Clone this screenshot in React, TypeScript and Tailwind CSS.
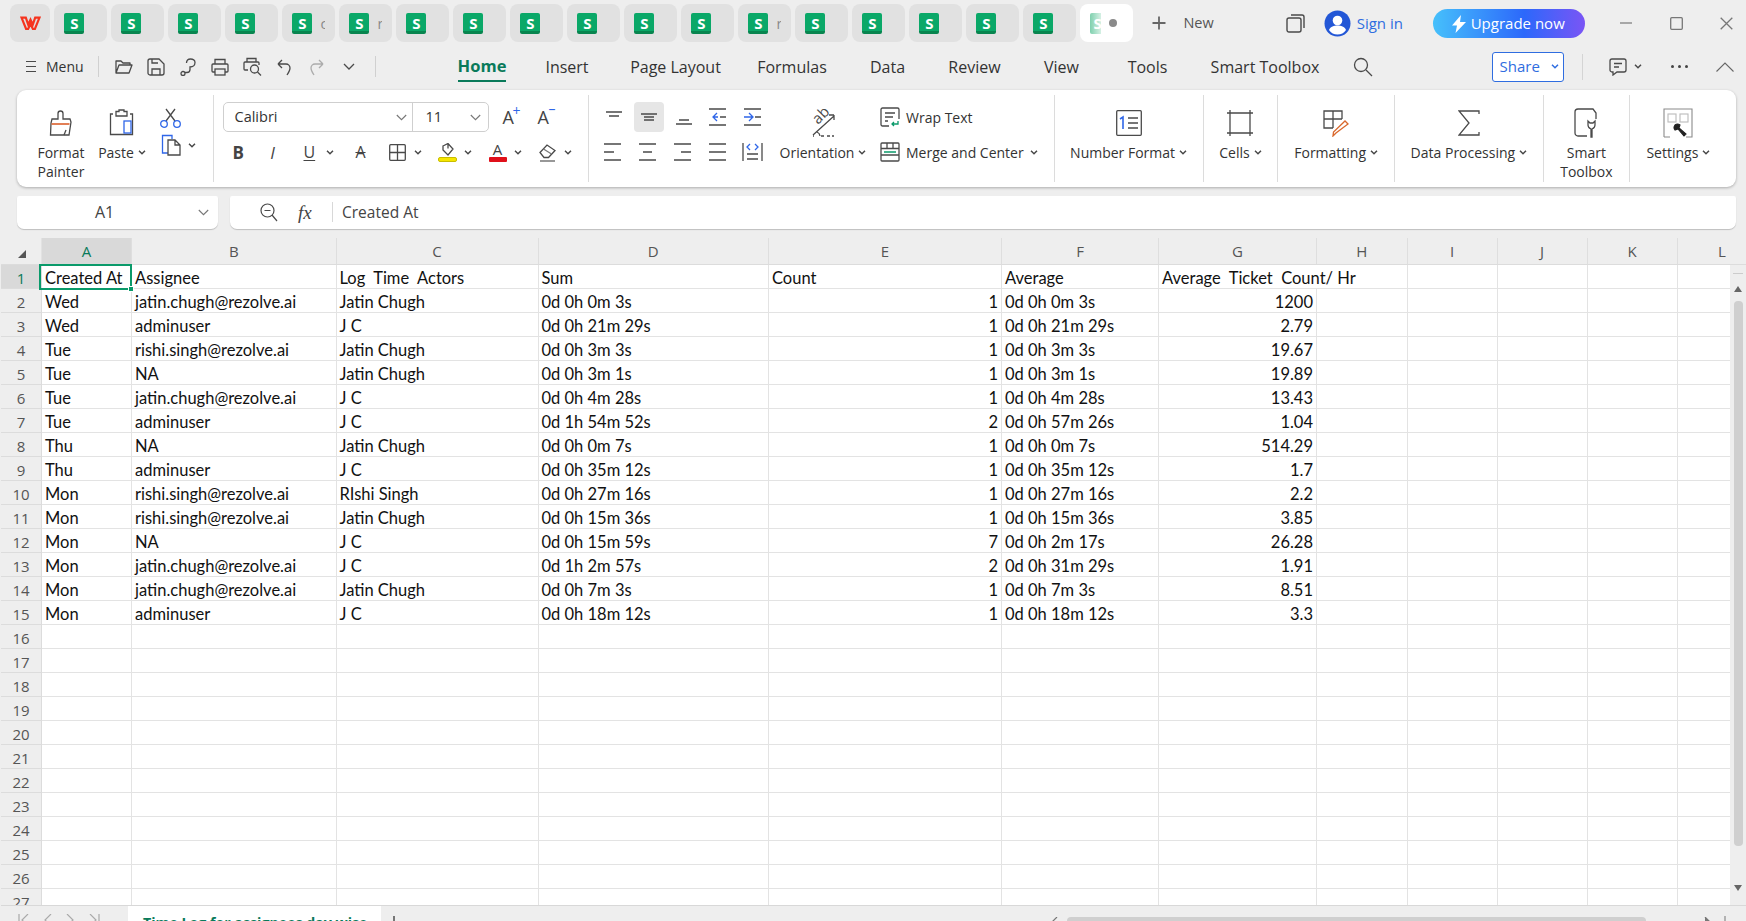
import React from "react";

const ui = "[font-family:'Open_Sans','Noto_Sans',sans-serif]";
const gridCols = "grid grid-cols-[41px_90px_204.5px_202px_230.5px_233px_157px_158px_90.5px_90px_90px_90px_90px]";

const rows: string[][] = [
  ["Created At", "Assignee", "Log  Time  Actors", "Sum", "Count", "Average", "Average  Ticket  Count/ Hr"],
  ["Wed", "jatin.chugh@rezolve.ai", "Jatin Chugh", "0d 0h 0m 3s", "1", "0d 0h 0m 3s", "1200"],
  ["Wed", "adminuser", "J C", "0d 0h 21m 29s", "1", "0d 0h 21m 29s", "2.79"],
  ["Tue", "rishi.singh@rezolve.ai", "Jatin Chugh", "0d 0h 3m 3s", "1", "0d 0h 3m 3s", "19.67"],
  ["Tue", "NA", "Jatin Chugh", "0d 0h 3m 1s", "1", "0d 0h 3m 1s", "19.89"],
  ["Tue", "jatin.chugh@rezolve.ai", "J C", "0d 0h 4m 28s", "1", "0d 0h 4m 28s", "13.43"],
  ["Tue", "adminuser", "J C", "0d 1h 54m 52s", "2", "0d 0h 57m 26s", "1.04"],
  ["Thu", "NA", "Jatin Chugh", "0d 0h 0m 7s", "1", "0d 0h 0m 7s", "514.29"],
  ["Thu", "adminuser", "J C", "0d 0h 35m 12s", "1", "0d 0h 35m 12s", "1.7"],
  ["Mon", "rishi.singh@rezolve.ai", "RIshi Singh", "0d 0h 27m 16s", "1", "0d 0h 27m 16s", "2.2"],
  ["Mon", "rishi.singh@rezolve.ai", "Jatin Chugh", "0d 0h 15m 36s", "1", "0d 0h 15m 36s", "3.85"],
  ["Mon", "NA", "J C", "0d 0h 15m 59s", "7", "0d 0h 2m 17s", "26.28"],
  ["Mon", "jatin.chugh@rezolve.ai", "J C", "0d 1h 2m 57s", "2", "0d 0h 31m 29s", "1.91"],
  ["Mon", "jatin.chugh@rezolve.ai", "Jatin Chugh", "0d 0h 7m 3s", "1", "0d 0h 7m 3s", "8.51"],
  ["Mon", "adminuser", "J C", "0d 0h 18m 12s", "1", "0d 0h 18m 12s", "3.3"],
];

const D = "#4a4a4a";
const B = "#2f66e8";

const Chev = ({ c = D }: { c?: string }) => (
  <svg width="8" height="5" viewBox="0 0 8 5" fill="none" stroke={c} strokeWidth="1.5" className="shrink-0">
    <path d="M1 .8l3 3 3-3" />
  </svg>
);
const BigChev = ({ c = "#777" }: { c?: string }) => (
  <svg width="11" height="7" viewBox="0 0 11 7" fill="none" stroke={c} strokeWidth="1.1" className="shrink-0">
    <path d="M.8 1l4.7 4.7L10.200 1" />
  </svg>
);

const Svg = ({ w, h, children, sw = 1.3, cls = "" }: { w: number; h: number; children: React.ReactNode; sw?: number; cls?: string }) => (
  <svg width={w} height={h} viewBox={`0 0 ${w} ${h}`} fill="none" stroke={D} strokeWidth={sw} className={`shrink-0 ${cls}`}>
    {children}
  </svg>
);

const SLogo = () => (
  <div className="w-[20px] h-[21px] rounded-[2px] bg-[linear-gradient(180deg,#0aa868_0%,#0aa868_88%,#08854f_88%)] flex items-center justify-center shrink-0 text-white font-bold text-[15px] leading-none [font-family:'Open_Sans',sans-serif]">
    S
  </div>
);

const tabExtras = ["", "", "", "", "c", "r", "", "", "", "", "", "", "r", "", "", "", "", ""];

function TitleBar() {
  return (
    <div className="h-[46px] shrink-0 flex items-start pt-[4px] pl-[10px]">
      <div className="w-[40px] h-[38px] rounded-[8px] bg-[#e1e1e1] flex items-center justify-center mr-[4.400px]">
        <svg width="21" height="15" viewBox="0 0 21 15" fill="none" stroke="#f5341f" strokeWidth="2.2">
          <path d="M1.500 1.600h4.300l2.400 7 2.300-5 2.300 5 2.400-7h4.300l-4.600 11.400h-2l-2.400-5-2.400 5h-2z" strokeLinejoin="miter" />
        </svg>
      </div>
      <div className="flex gap-[4px]">
        {tabExtras.map((t, i) => (
          <div key={i} className="w-[53px] h-[38px] rounded-[8px] bg-[#e1e1e1] flex items-center pl-[10px] overflow-hidden">
            <SLogo />
            {t && <span className="ml-[8px] w-[5px] overflow-hidden text-[14px] text-[#888]">{t}</span>}
          </div>
        ))}
        <div className="w-[53px] h-[38px] rounded-[8px] bg-white flex items-center pl-[10px]">
          <div className="w-[11px] h-[21px] rounded-l-[2px] bg-[linear-gradient(90deg,#7fd0ae,#d5f0e4)] text-white text-[15px] font-bold overflow-hidden leading-[21px] pl-[3px]">S</div>
          <div className="ml-[8px] w-[8px] h-[8px] rounded-full bg-[#8a8a8a]" />
        </div>
      </div>
      <div className="flex items-center h-[38px] ml-[18px] text-[14.500px] text-[#555]">
        <Svg w={16} h={16} sw={1.800}><path d="M8 1.500v13M1.500 8h13" stroke="#666" /></Svg>
        <span className="ml-[16px]">New</span>
      </div>
      <div className="flex items-center h-[38px] ml-[72px]">
        <Svg w={19} h={19} sw={1.400}>
          <rect x="1" y="4" width="14" height="14" rx="2" />
          <path d="M5 1h11a2 2 0 0 1 2 2v11" />
        </Svg>
        <svg width="27" height="27" viewBox="0 0 27 27" className="ml-[19px]">
          <circle cx="13.500" cy="13.500" r="13" fill="#2357d6" />
          <circle cx="13.500" cy="10.500" r="4.800" fill="#fff" />
          <path d="M5 20c1.500-3.500 5-4.500 8.500-4.500s7 1 8.500 4.500c-2 3-5 4.500-8.500 4.500S7 23 5 20z" fill="#fff" />
        </svg>
        <span className="ml-[6px] w-[47px] whitespace-nowrap text-[15px] text-[#2f6de0]">Sign in</span>
      </div>
      <div className="ml-[29px] mt-[5px] w-[152px] h-[29px] rounded-full bg-[linear-gradient(90deg,#46c0fb_0%,#2c68fb_60%,#7a55f5_100%)] flex items-center pl-[19px] text-white text-[15px]">
        <svg width="14" height="18" viewBox="0 0 14 18" fill="#fff"><path d="M9 0L0 10.500h5L3.500 18 14 7H8z" /></svg>
        <span className="ml-[5px]">Upgrade now</span>
      </div>
      <div className="flex items-center h-[38px] ml-[35px]">
        <Svg w={12} h={2} sw={1.400}><path d="M0 1h12" stroke="#888" /></Svg>
        <Svg w={13} h={13} sw={1.300} cls="ml-[38px]"><rect x=".7" y=".7" width="11.600" height="11.600" rx="1" stroke="#777" /></Svg>
        <Svg w={13} h={13} sw={1.300} cls="ml-[37px]"><path d="M.7.7l11.600 11.600M12.300.7L.7 12.300" stroke="#777" /></Svg>
      </div>
    </div>
  );
}

const tabs: [string, string][] = [
  ["Insert", "w-[79px]"],
  ["Page Layout", "w-[138px]"],
  ["Formulas", "w-[95px]"],
  ["Data", "w-[96px]"],
  ["Review", "w-[78px]"],
  ["View", "w-[96px]"],
  ["Tools", "w-[76px]"],
  ["Smart Toolbox", "w-[159px]"],
];

function MenuBar() {
  return (
    <div className="h-[43.500px] shrink-0 flex items-center pb-[2px] text-[#333]">
      <Svg w={10} h={13} cls="ml-[26px]" sw={1.200}><path d="M0 1.500h10M0 6.500h10M0 11.500h10" /></Svg>
      <span className="ml-[10px] w-[37px] text-[14px]">Menu</span>
      <div className="ml-[15px] w-px h-[21px] bg-[#d0d0d0]" />
      <Svg w={18} h={16} cls="ml-[16px]">
        <path d="M1 14V2h5l2 2h7v2M1 14l3-8h13l-3 8z" strokeLinejoin="round" />
      </Svg>
      <Svg w={18} h={18} cls="ml-[14px]">
        <path d="M1 3a2 2 0 0 1 2-2h9l5 5v9a2 2 0 0 1-2 2H3a2 2 0 0 1-2-2z" />
        <path d="M5 1v4h6M5 17v-6h8v6" />
      </Svg>
      <Svg w={16} h={18} cls="ml-[15px]">
        <path d="M1 15.500a2 2 0 1 0 4 0 2 2 0 1 0-4 0M5 14.500h2c2 0 3-1 3-3V9c3 0 5-2 5-4.500S13 1 10.500 1 6.500 2.500 6.500 5" />
      </Svg>
      <Svg w={18} h={18} cls="ml-[15px]">
        <path d="M4 6V1.500h10V6M4 14H2a1 1 0 0 1-1-1V7a1 1 0 0 1 1-1h14a1 1 0 0 1 1 1v6a1 1 0 0 1-1 1h-2" />
        <rect x="4" y="11" width="10" height="6" />
      </Svg>
      <Svg w={19} h={19} cls="ml-[14px]">
        <path d="M4 5V1.500h9V5M5 13H2a1 1 0 0 1-1-1V6a1 1 0 0 1 1-1h13a1 1 0 0 1 1 1v2" />
        <circle cx="11.500" cy="12" r="4" />
        <path d="M14.500 15l3.500 3.500" />
      </Svg>
      <Svg w={14} h={18} cls="ml-[15px]">
        <path d="M1 6h8a4 4 0 0 1 4 4c0 2-1 4-3 7M1 6l4-4M1 6l4 4" />
      </Svg>
      <Svg w={14} h={18} cls="ml-[19px] opacity-40">
        <path d="M13 6H5a4 4 0 0 0-4 4c0 2 1 4 3 7M13 6L9 2M13 6L9 10" />
      </Svg>
      <Svg w={12} h={7} cls="ml-[19px]"><path d="M1 1l5 5 5-5" /></Svg>
      <div className="ml-[19.500px] w-px h-[21px] bg-[#d0d0d0]" />
      <div className="ml-[61px] w-[91px] flex justify-center">
        <span className="relative text-[16.500px] font-bold text-[#097a5a]">
          Home
          <span className="absolute left-0 right-0 top-[26px] h-[2px] bg-[#097a5a]" />
        </span>
      </div>
      {tabs.map(([t, w]) => (
        <div key={t} className={`${w} flex justify-center text-[16px] text-[#333] whitespace-nowrap`}>{t}</div>
      ))}
      <Svg w={20} h={20} cls="ml-[8px]" sw={1.300}>
        <circle cx="8" cy="8" r="6.500" />
        <path d="M13 13l6 6" />
      </Svg>
      <div className="ml-[119px] w-[72px] h-[30px] rounded-[3px] border border-[#2f6de0] bg-white flex items-center pl-[7px] pb-[1px] text-[15px] text-[#2f6de0]">
        Share
        <span className="ml-[11px]"><Chev c="#2f6de0" /></span>
      </div>
      <div className="ml-[18px] w-px h-[26px] bg-[#d4d4d4]" />
      <Svg w={18} h={18} cls="ml-[26px]">
        <path d="M3 1h12a2 2 0 0 1 2 2v9a2 2 0 0 1-2 2H8l-4 3v-3H3a2 2 0 0 1-2-2V3a2 2 0 0 1 2-2zM5 5.500h8M5 9h5" />
      </Svg>
      <span className="ml-[7px]"><Chev /></span>
      <div className="ml-[29px] flex gap-[4px]">
        <div className="w-[3px] h-[3px] rounded-full bg-[#444]" />
        <div className="w-[3px] h-[3px] rounded-full bg-[#444]" />
        <div className="w-[3px] h-[3px] rounded-full bg-[#444]" />
      </div>
      <Svg w={18} h={10} cls="ml-[28px]" sw={1.100}><path d="M.5 9.500L9 1l8.500 8.500" stroke="#666" /></Svg>
    </div>
  );
}

const Label = ({ children }: { children: React.ReactNode }) => (
  <div className="text-[14px] leading-[19px] text-[#333] text-center whitespace-nowrap">{children}</div>
);

function BigItem({ w, icon, label, chev = true, line2 }: { w: string; icon: React.ReactNode; label: string; chev?: boolean; line2?: string }) {
  return (
    <div className={`${w} shrink-0 h-full flex flex-col items-center pt-[15px]`}>
      <div className="h-[26px] flex items-center justify-center">{icon}</div>
      <div className="mt-[7px] flex items-center gap-[4px]">
        <Label>{label}</Label>
        {chev && <Chev />}
      </div>
      {line2 && <Label>{line2}</Label>}
    </div>
  );
}

const Sep = () => <div className="w-px h-full bg-[#dcdcdc] shrink-0" />;

function Ribbon() {
  return (
    <div className="h-[97.500px] shrink-0 ml-[17px] mr-[10.500px] rounded-[9px] bg-white shadow-[0_1px_3px_rgba(0,0,0,0.28)] flex py-[5.500px] overflow-hidden">
      {/* clipboard */}
      <div className="w-[195.500px] h-full flex shrink-0 pl-[13px]">
        <BigItem
          w="w-[62px]"
          chev={false}
          label="Format"
          line2="Painter"
          icon={
            <Svg w={24} h={27}>
              <path d="M9 9V3.500a2.500 2.500 0 0 1 5 0V9h7l1 3-2 13H1.500L2 13l1-4z" />
              <path d="M2.500 14h18" stroke="#d9541e" />
              <path d="M15 25l2-5" />
            </Svg>
          }
        />
        <BigItem
          w="w-[60px]"
          label="Paste"
          icon={
            <Svg w={26} h={28}>
              <path d="M4 5H1.500v20.500h22V5H21M7 2.500h3V1h5v1.500h3V7H7z" />
              <rect x="15" y="12" width="7" height="12" stroke={B} />
            </Svg>
          }
        />
        <div className="flex flex-col pl-[9px] pt-[13px]">
          <Svg w={21} h={20} cls="ml-[-1px]">
            <path d="M6 13L15 1M15 13L6 1" />
            <circle cx="4" cy="16" r="3.300" stroke={B} />
            <circle cx="17" cy="16" r="3.300" stroke={B} />
          </Svg>
          <div className="flex items-center mt-[6px]">
            <Svg w={20} h={22}>
              <path d="M7 19H1.500V1.500H11V5" stroke={B} />
              <path d="M7 6h7l5 5v10H7zM14 6v5h5" />
            </Svg>
            <span className="ml-[7px]"><Chev /></span>
          </div>
        </div>
      </div>
      <Sep />
      {/* font */}
      <div className="w-[374.500px] h-full shrink-0 flex flex-col pt-[7px]">
        <div className="flex items-center h-[30px]">
          <div className="ml-[9px] w-[266px] h-[30px] rounded-[5px] border border-[#cfcfcf] flex items-center text-[14.500px] text-[#333]">
            <div className="w-[189px] h-full pl-[11px] flex items-center border-r border-[#cfcfcf]">
              <span className="w-[161px]">Calibri</span>
              <BigChev />
            </div>
            <span className="ml-[13px] w-[44px]">11</span>
            <BigChev />
          </div>
          <div className="ml-[14px] w-[18px] relative text-[18px] leading-none text-[#444]">
            A<span className="absolute right-0 -top-[4px] text-[14px] text-[#2f66e8]">+</span>
          </div>
          <div className="ml-[17px] w-[18px] relative text-[18px] leading-none text-[#444]">
            A<span className="absolute right-[0px] -top-[6px] text-[14px] text-[#2f66e8]">–</span>
          </div>
        </div>
        <div className="flex items-center h-[24px] mt-[8px] text-[#444]">
          <span className="ml-[19px] w-[12px] text-[17px] font-bold leading-none">B</span>
          <span className="ml-[21px] w-[14px] text-[17px] italic leading-none text-center">I</span>
          <span className="ml-[24px] w-[13px] text-[16px] leading-none underline underline-offset-2">U</span>
          <span className="ml-[9px]"><Chev /></span>
          <span className="ml-[19px] w-[16px] text-[16px] leading-none line-through text-center">A</span>
          <Svg w={17} h={17} cls="ml-[20px]"><rect x=".7" y=".7" width="15.600" height="15.600" rx="1" /><path d="M8.500 1v15M1 8.500h15" /></Svg>
          <span className="ml-[8px]"><Chev /></span>
          <div className="ml-[16px] w-[19px] flex flex-col items-center">
            <Svg w={16} h={13}><path d="M4 3l5-2.500 5 5.500-5 6-5-5zM9 .5v5" /></Svg>
            <div className="w-[19px] h-[5px] rounded-[2px] bg-[#f6e600] border border-[#c9bd00] mt-[1px]" />
          </div>
          <span className="ml-[7px]"><Chev /></span>
          <div className="ml-[17px] w-[18px] flex flex-col items-center">
            <span className="text-[15px] leading-[14px]">A</span>
            <div className="w-[18px] h-[5px] rounded-[1px] bg-[#e0101a] mt-[1px]" />
          </div>
          <span className="ml-[7px]"><Chev /></span>
          <Svg w={20} h={19} cls="ml-[16px]">
            <path d="M2 9.500l7-7.500 8 5.500-6.500 7H6z" />
            <path d="M5.500 6l8 5M2 18h15" stroke="#777" />
          </Svg>
          <span className="ml-[6px]"><Chev /></span>
        </div>
      </div>
      <Sep />
      {/* alignment */}
      <div className="w-[464.600px] h-full shrink-0 flex">
        <div className="w-[180px] shrink-0 flex flex-col pt-[7px]">
          <div className="flex items-center h-[30px]">
            <div className="w-[30px] h-[30px] ml-[10px] flex items-start justify-center pt-[9px]">
              <Svg w={16} h={6}><path d="M0 1h16M3 5h10" /></Svg>
            </div>
            <div className="w-[30px] h-[30px] ml-[5px] rounded-[4px] bg-[#e6e6e6] flex items-center justify-center">
              <Svg w={16} h={8}><path d="M0 1h16M3 4h10M3 7h10" /></Svg>
            </div>
            <div className="w-[30px] h-[30px] ml-[5px] flex items-end justify-center pb-[7px]">
              <Svg w={16} h={6}><path d="M3 1h10M0 5h16" /></Svg>
            </div>
            <Svg w={17} h={18} cls="ml-[10px]"><path d="M0 1h17M0 17h17M11 9h6" /><path d="M8 5L4 9l4 4M4 9h5" stroke={B} /></Svg>
            <Svg w={17} h={18} cls="ml-[18px]"><path d="M0 1h17M0 17h17M11 9h6" /><path d="M5 5l4 4-4 4M0 9h9" stroke={B} /></Svg>
          </div>
          <div className="flex items-center h-[24px] mt-[8px]">
            <Svg w={17} h={18} cls="ml-[15px]"><path d="M0 1h17M0 9h10M0 17h17" /></Svg>
            <Svg w={17} h={18} cls="ml-[18px]"><path d="M0 1h17M4 9h9M0 17h17" /></Svg>
            <Svg w={17} h={18} cls="ml-[18px]"><path d="M0 1h17M7 9h10M0 17h17" /></Svg>
            <Svg w={17} h={18} cls="ml-[18px]"><path d="M0 1h17M0 9h17M0 17h17" /></Svg>
            <Svg w={21} h={20} cls="ml-[16px]"><path d="M1 1v18M20 1v18M5 12h11M5 17h11" /><path d="M8 2L5 5l3 3M13 2l3 3-3 3" stroke={B} /></Svg>
          </div>
        </div>
        <div className="w-[108px] shrink-0 h-full flex flex-col items-center pt-[15px]">
          <div className="h-[26px] flex items-center">
            <Svg w={28} h={28}>
              <path d="M4 26L25 7M25 6h-5M25 6v5" />
              <path d="M5 27h-1M12 27h3M18 27h3M23 27h2M8 23a5 5 0 0 1 3 4" />
              <text x="0" y="0" transform="translate(9 16) rotate(-45)" fontSize="15" fill={D} stroke="none" fontFamily="Open Sans">ab</text>
            </Svg>
          </div>
          <div className="mt-[7px] flex items-center gap-[4px]"><Label>Orientation</Label><Chev /></div>
        </div>
        <div className="flex flex-col pt-[7px] ml-[3px] text-[14px] text-[#333]">
          <div className="h-[30px] flex items-center">
            <Svg w={20} h={20}>
              <path d="M9 19H2.500a1.500 1.500 0 0 1-1.500-1.500v-15A1.500 1.500 0 0 1 2.500 1h15A1.500 1.500 0 0 1 19 2.500V12M5 6h10M5 10h8M5 14h3" />
              <path d="M18 14v3h-6M14 15l-2 2 2 2" stroke="#0a9a6a" />
            </Svg>
            <span className="ml-[6px]">Wrap Text</span>
          </div>
          <div className="h-[24px] mt-[8px] flex items-center">
            <Svg w={20} h={20}>
              <rect x="1" y="1" width="18" height="18" rx="1" />
              <path d="M1 6.500h18M7 1v5.500M13 1v5.500M1 13h18" />
              <path d="M4 10h12" stroke="#0a9a6a" />
            </Svg>
            <span className="ml-[6px]">Merge and Center</span>
            <span className="ml-[6px]"><Chev /></span>
          </div>
        </div>
      </div>
      <Sep />
      <BigItem
        w="w-[148px]"
        label="Number Format"
        icon={
          <Svg w={26} h={26}>
            <rect x=".7" y=".7" width="24.600" height="24.600" rx="1" />
            <path d="M4 9l3-2v12" stroke={B} strokeWidth={1.600} />
            <path d="M12 8h10M12 13h10M12 18h10" />
          </Svg>
        }
      />
      <Sep />
      <BigItem
        w="w-[73.800px]"
        label="Cells"
        icon={
          <Svg w={26} h={26}>
            <path d="M0 3h26M0 23h26M3 0v26M23 0v26" />
          </Svg>
        }
      />
      <Sep />
      <BigItem
        w="w-[115.500px]"
        label="Formatting"
        icon={
          <Svg w={27} h={27}>
            <path d="M10 18H1V1h18v8M1 9h18M10 1v17" />
            <path d="M13 23l-3 3 .5-4L22 11l3 3z" stroke="#d9682d" />
          </Svg>
        }
      />
      <Sep />
      <BigItem
        w="w-[148px]"
        label="Data Processing"
        icon={
          <Svg w={22} h={26}>
            <path d="M21 4V1H1l10 12L1 25h20v-3" />
          </Svg>
        }
      />
      <Sep />
      <BigItem
        w="w-[85px]"
        chev={false}
        label="Smart"
        line2="Toolbox"
        icon={
          <Svg w={25} h={30}>
            <path d="M13 28H4a3 3 0 0 1-3-3V4a3 3 0 0 1 3-3h15l3 4v6" />
            <path d="M17 29V21a5 5 0 0 1-3-5v-3l2 2h3l2-2v3a5 5 0 0 1-3 5v8z" />
          </Svg>
        }
      />
      <Sep />
      <BigItem
        w="w-[97px]"
        label="Settings"
        icon={
          <Svg w={30} h={30} sw={1.100}>
            <path d="M1 29V1h28v28h-6M1 29h6" stroke="#8a8a8a" />
            <rect x="5" y="6" width="8" height="8" stroke="#bbb" />
            <rect x="17" y="6" width="8" height="8" stroke="#bbb" />
            <path d="M12 17a4 4 0 0 1 5 0l-1 3 7 6-2 2-6-7-3 1a4 4 0 0 1 0-5z" fill="#222" stroke="#222" />
          </Svg>
        }
      />
    </div>
  );
}

function FormulaBar() {
  return (
    <div className="h-[33.500px] shrink-0 mt-[8.700px] ml-[17px] mr-[10.500px] flex gap-[12px]">
      <div className="w-[201px] h-full rounded-b-[7px] rounded-t-[2px] bg-white shadow-[0_1px_1px_rgba(0,0,0,0.2)] flex items-center pl-[78px] text-[16px] text-[#444]">
        <span className="w-[103px]">A1</span>
        <BigChev />
      </div>
      <div className="flex-1 h-full rounded-b-[7px] rounded-t-[2px] bg-white shadow-[0_1px_1px_rgba(0,0,0,0.2)] flex items-center pl-[30px]">
        <Svg w={18} h={19} sw={1.200}>
          <circle cx="7.500" cy="7.500" r="6.500" />
          <path d="M12 12l5 6M4.500 7.500h6" />
        </Svg>
        <span className="ml-[20px] w-[20px] [font-family:'Liberation_Serif',serif] italic text-[19px] text-[#444] leading-none">fx</span>
        <div className="ml-[14px] w-px h-[20px] bg-[#d8d8d8]" />
        <span className="ml-[9px] text-[15.500px] text-[#444]">Created At</span>
      </div>
    </div>
  );
}

const colNames = ["A", "B", "C", "D", "E", "F", "G", "H", "I", "J", "K", "L"];
const cell = "[font-family:'Lato',sans-serif] text-[16.500px] leading-[18px] text-[#111]";

function Sheet() {
  const total = 27;
  return (
    <div className="flex-1 min-h-0 mt-[8.700px] ml-[1px] overflow-hidden relative bg-white border-b border-[#d8d8d8]">
      <div className={`${gridCols} h-[27px] bg-[#eeeeee] border-b border-[#dcdcdc] text-[15px] text-[#555] relative`}>
        <div className="border-r border-[#e2e2e2] relative">
          <div className="absolute right-[15px] bottom-[6px] w-0 h-0 border-l-[8px] border-l-transparent border-b-[8px] border-b-[#555]" />
        </div>
        {colNames.map((c, i) => (
          <div key={c} className={`flex items-center justify-center border-r border-[#dedede] ${i === 0 ? "bg-[#d9d9d9] text-[#097a5a]" : ""}`}>{c}</div>
        ))}
      </div>
      <div className="flex">
        <div className="w-[1729px] overflow-hidden shrink-0">
          {Array.from({ length: total }).map((_, r) => {
            const row = rows[r] ?? [];
            return (
              <div key={r} className={`${gridCols} h-[24px]`}>
                <div className={`flex items-center justify-center pt-[3px] border-r border-b border-[#dcdcdc] text-[15px] leading-[18px] ${r === 0 ? "bg-[#d9d9d9] text-[#097a5a]" : "bg-[#eeeeee] text-[#555]"}`}>{r + 1}</div>
                {colNames.map((_c, i) => {
                  const v = row[i] ?? "";
                  const right = r > 0 && (i === 4 || i === 6);
                  return (
                    <div key={i} className={`${cell} border-r border-b border-[#e3e3e3] flex items-center px-[3px] pt-[3px] whitespace-pre ${right ? "justify-end" : ""} ${r === 0 && i === 6 ? "border-r-0" : ""}`}>
                      {v}
                    </div>
                  );
                })}
              </div>
            );
          })}
        </div>
        <div className="w-[16px] shrink-0 bg-[#eeeeee] flex flex-col items-center">
          <div className="mt-[8px] w-[10px] h-px bg-[#ccc]" />
          <div className="mt-[12px] w-0 h-0 border-l-[4px] border-l-transparent border-r-[4px] border-r-transparent border-b-[6px] border-b-[#666]" />
          <div className="mt-[9px] w-[9px] h-[545px] rounded-b-[4px] rounded-t-[4px] bg-[#cfcfcf]" />
          <div className="mt-[39px] w-0 h-0 border-l-[4px] border-l-transparent border-r-[4px] border-r-transparent border-t-[6px] border-t-[#666]" />
        </div>
      </div>
      <div className="absolute left-[38px] top-[26px] w-[93px] h-[26px] border-[2px] border-[#0a9a6a]">
        <div className="absolute right-[-4px] bottom-[-4px] w-[6px] h-[6px] bg-[#0a9a6a] border border-white" />
      </div>
    </div>
  );
}

function Bottom() {
  return (
    <div className="h-[15px] shrink-0 bg-[#eeeeee] flex items-start overflow-hidden ml-[1px]">
      <div className="w-[127px] shrink-0 flex items-start pl-[17px] pt-[8px] gap-[14px]">
        <Svg w={12} h={12} sw={1.200}><path d="M1 0v12M10 0L4 6l6 6" stroke="#aaa" /></Svg>
        <Svg w={8} h={12} sw={1.200}><path d="M7 0L1 6l6 6" stroke="#aaa" /></Svg>
        <Svg w={8} h={12} sw={1.200}><path d="M1 0l6 6-6 6" stroke="#aaa" /></Svg>
        <Svg w={12} h={12} sw={1.200}><path d="M11 0v12M2 0l6 6-6 6" stroke="#aaa" /></Svg>
      </div>
      <div className="w-[253px] shrink-0 h-[15px] bg-white pl-[15px] pt-[8px] text-[14.200px] leading-[18px] font-bold text-[#097a5a] whitespace-nowrap overflow-hidden">
        Time Log for assignees day wise
      </div>
      <Svg w={12} h={12} cls="ml-[7px] mt-[10px]" sw={1.400}><path d="M6 0v12M0 6h12" stroke="#444" /></Svg>
      <Svg w={6} h={8} cls="ml-[652px] mt-[11px]" sw={1.200}><path d="M5 0L1 4l4 4" stroke="#777" /></Svg>
      <div className="ml-[9px] mt-[11px] w-[579px] h-[6px] rounded-t-[4px] bg-[#cfcfcf] shrink-0" />
      <Svg w={6} h={8} cls="ml-[58px] mt-[11px]" sw={1.200}><path d="M1 0l4 4-4 4" stroke="#777" fill="#777" /></Svg>
      <Svg w={2} h={8} cls="ml-[14px] mt-[10px]" sw={1}><path d="M1 0v8" stroke="#777" /></Svg>
    </div>
  );
}

export default function App() {
  return (
    <div className={`${ui} w-[1746px] h-[921px] bg-[#eeeeee] overflow-hidden flex flex-col`}>
      <TitleBar />
      <MenuBar />
      <Ribbon />
      <FormulaBar />
      <Sheet />
      <Bottom />
    </div>
  );
}
